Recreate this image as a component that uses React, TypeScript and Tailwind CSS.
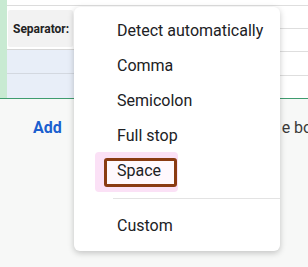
export default function App() {
  const items = ["Detect automatically", "Comma", "Semicolon", "Full stop"];
  return (
    <div className="relative w-[308px] h-[267px] overflow-hidden bg-[#f7f8f7] font-['Roboto',sans-serif]">
      {/* sheet behind the menu */}
      <div className="flex h-[99px] border-b border-[#3f9c6f]">
        <div className="w-[7px] bg-[#c8ead2]" />
        <div className="flex-1 flex flex-col bg-white">
          <div className="h-[6px] border-b border-[#dcdcdc] relative overflow-hidden">
            <span className="absolute left-[14px] -top-[11px] text-[12px] font-bold text-[#333] leading-[14px]">Master.Item</span>
          </div>
          <div className="h-[44px] pl-[1px] pt-[4px] border-b border-[#d6d6d6]">
            <div className="w-[65px] h-[37px] bg-[#f2f2f2] rounded-[2px] flex items-center pl-[5px] text-[12px] font-bold text-[#222]">
              Separator:
            </div>
          </div>
          <div className="h-[24px] bg-[#e8eef8] border-b border-[#d3d8e0]" />
          <div className="flex-1 bg-[#e8eef8]" />
        </div>
        <div className="w-[228px] flex flex-col bg-white">
          <div className="h-[6px] border-b border-[#dedede]" />
          <div className="h-[23px] border-b border-[#dedede]" />
          <div className="h-[23px] border-b border-[#dedede]" />
          <div className="h-[24px] border-b border-[#dedede]" />
          <div className="flex-1" />
        </div>
      </div>
      <div className="flex items-center h-[58px]">
        <span className="ml-[33px] text-[16px] font-bold text-[#1b5fcf]">Add</span>
        <span className="ml-auto mr-[-12px] text-[16px] text-[#3a3a3a]">e box</span>
      </div>

      {/* dropdown menu */}
      <div className="absolute left-[74px] top-[7px] w-[206px] h-[244px] bg-white rounded-[6px] shadow-[0_2px_6px_rgba(0,0,0,0.22)] pt-[6px] text-[16px] text-[#202124]">
        {items.map((t) => (
          <div key={t} className="h-[35px] flex items-center pl-[43px]">
            {t}
          </div>
        ))}
        <div className="relative h-[35px] flex items-center pl-[43px]">
          <span className="absolute left-[21px] -top-[1px] w-[83px] h-[40px] bg-[#fbe1f6] rounded-[4px]" />
          <span className="absolute left-[30px] top-[5px] w-[73px] h-[29px] border-[3px] border-[#8a3b12] rounded-[3px] bg-[#fff8fd]" />
          <span className="relative">Space</span>
        </div>
        <div className="ml-[39px] mt-[10px] border-t border-[#e3e3e3]" />
        <div className="h-[35px] mt-[9px] flex items-center pl-[43px]">Custom</div>
      </div>
    </div>
  );
}
